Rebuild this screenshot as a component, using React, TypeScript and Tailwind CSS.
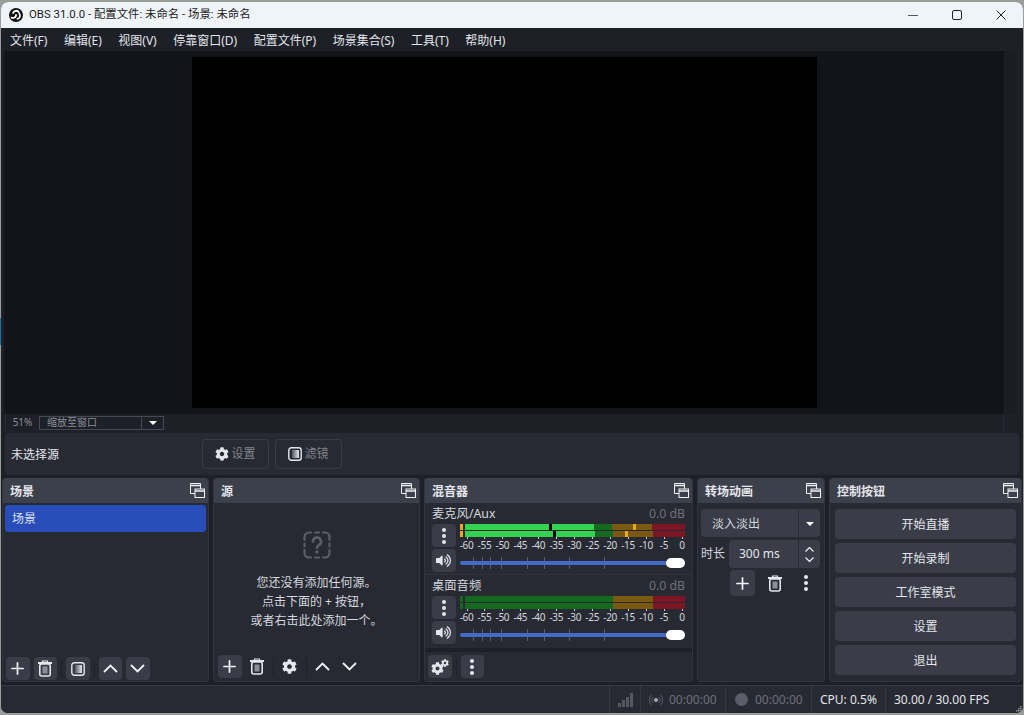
import { Plus } from "lucide-react";
import { FaCog, FaVolumeUp } from "react-icons/fa";

const FONT = "font-['Noto_Sans','Noto_Sans_CJK_SC',sans-serif]";

const MENU = ["文件(F)", "编辑(E)", "视图(V)", "停靠窗口(D)", "配置文件(P)", "场景集合(S)", "工具(T)", "帮助(H)"];
const DB = ["-60", "-55", "-50", "-45", "-40", "-35", "-30", "-25", "-20", "-15", "-10", "-5", "0"];

function ObsLogo() {
  return (
    <svg width="14" height="14" viewBox="0 0 24 24">
      <circle cx="12" cy="12" r="12" fill="#111" />
      <g fill="none" stroke="#fff" strokeWidth="3" strokeLinecap="round">
        <path d="M7 8.500a5.500 5.500 0 0 1 10 -1" />
        <path d="M17.500 9.500a5.500 5.500 0 0 1 -3 9" />
        <path d="M12 13.500a5.500 5.500 0 0 1 -7.500 3" />
      </g>
      <circle cx="12" cy="12" r="1.600" fill="#fff" />
    </svg>
  );
}

function FloatIcon() {
  return (
    <svg width="15" height="15" viewBox="0 0 15 15" fill="none" stroke="#f0f1f4" strokeWidth="1">
      <path d="M5 10.500H.5V.5h10V6" />
      <path d="M.5 2.500h10" strokeWidth="1.600" />
      <rect x="5" y="6" width="9.500" height="8.500" fill="#3c404b" />
      <path d="M5 8h9.500" strokeWidth="1.600" />
    </svg>
  );
}

function TrashIcon() {
  return (
    <svg width="16" height="17" viewBox="0 0 16 17" fill="none" stroke="#e4e6ec" strokeWidth="1.600">
      <path d="M1 3h14" strokeWidth="2" />
      <path d="M5.500 2.500V1h5v1.500" strokeWidth="1.200" />
      <rect x="2.800" y="4" width="10.400" height="12" rx="2" />
      <rect x="5.500" y="6.500" width="5" height="7" fill="#8b8e96" stroke="none" />
    </svg>
  );
}

function FilterIcon({ id }: { id: string }) {
  return (
    <svg width="14" height="14" viewBox="0 0 14 14">
      <defs>
        <linearGradient id={id} x1="0" x2="1" y1="0" y2="0">
          <stop offset="0" stopColor="#555862" />
          <stop offset="1" stopColor="#e4e6ec" />
        </linearGradient>
      </defs>
      <rect x="0.800" y="0.800" width="12.400" height="12.400" rx="2.500" fill="none" stroke="#e4e6ec" strokeWidth="1.400" />
      <rect x="4" y="3" width="7" height="8" fill={`url(#${id})`} />
    </svg>
  );
}

function DotsIcon() {
  return (
    <svg width="6" height="18" viewBox="0 0 6 18" fill="#e4e6ec">
      <circle cx="3" cy="3" r="2" />
      <circle cx="3" cy="9" r="2" />
      <circle cx="3" cy="15" r="2" />
    </svg>
  );
}

function UpIcon() {
  return (
    <svg width="15" height="9" viewBox="0 0 15 9" fill="none" stroke="#f0f1f4" strokeWidth="1.800">
      <path d="M1 8l6.500-6.500L14 8" />
    </svg>
  );
}

function DownIcon() {
  return (
    <svg width="15" height="9" viewBox="0 0 15 9" fill="none" stroke="#f0f1f4" strokeWidth="1.800">
      <path d="M1 1l6.500 6.500L14 1" />
    </svg>
  );
}

function QuestionIcon() {
  return (
    <svg width="28" height="28" viewBox="0 0 28 28" fill="none" stroke="#5b5e68" strokeWidth="2.200" strokeLinecap="round">
      <path d="M1.500 9V6a4.500 4.500 0 0 1 4.500-4.500h2M12 1.500h4M20 1.500h2A4.500 4.500 0 0 1 26.500 6v3M26.500 12.500v3M26.500 19v3a4.500 4.500 0 0 1-4.500 4.500h-2M16 26.500h-4M8 26.500H6A4.500 4.500 0 0 1 1.500 22v-3M1.500 15.500v-3" />
      <path d="M10 10.500a4 4 0 1 1 5.800 3.600c-1.200.6-1.800 1.300-1.800 2.600" strokeWidth="2.600" />
      <circle cx="14" cy="21" r="1" fill="#5b5e68" strokeWidth="1.400" />
    </svg>
  );
}

function ToolBtn({ bg = true, children }: { bg?: boolean; children: React.ReactNode }) {
  return (
    <div className={`flex h-[23px] w-[23.5px] items-center justify-center rounded-[4px] ${bg ? "bg-[#3a3d48]" : ""}`}>
      {children}
    </div>
  );
}

function Sep() {
  return <div className="h-[18px] w-px bg-[#1f2128]" />;
}

function Dock({ title, className, children }: { title: string; className: string; children: React.ReactNode }) {
  return (
    <section className={`flex flex-col overflow-hidden rounded-[4px] border border-t-0 border-[#31343e] bg-[#272a33] ${className}`}>
      <header className="flex h-[25px] shrink-0 items-center justify-between bg-[#3c404b] pl-[7px] pr-[3px]">
        <span className="pt-[2px] text-[12px] font-bold text-[#e4e6ec]">{title}</span>
        <FloatIcon />
      </header>
      {children}
    </section>
  );
}

function DbScale() {
  return (
    <div className="flex justify-between pl-[6px] pr-[2px] text-[10px] leading-[12px] tracking-[-0.3px] text-[#d5d7dd]">
      {DB.map((d) => (
        <span key={d} className="relative flex w-[2px] justify-center whitespace-nowrap">
          <span className="absolute left-[1px] top-[-2px] h-[2px] w-px bg-[#c9cbd2]" />
          {d}
        </span>
      ))}
    </div>
  );
}

function MeterTrack({ segments }: { segments: string[] }) {
  return (
    <div className="flex h-[6px]">
      {segments.map((s, i) => (
        <div key={i} className={s} />
      ))}
    </div>
  );
}

function Slider() {
  return (
    <div className="relative flex h-[14px] flex-1 items-center">
      <svg className="absolute left-0 top-0" width="226" height="14" stroke="#5d6069" strokeWidth="1">
        <path d="M13.500 1v12M22.500 1v12M30.500 1v12M41.500 1v12M67.500 1v12M84.500 1v12M109.500 1v12M144.500 1v12" />
      </svg>
      <div className="relative h-[4px] w-full rounded-full bg-[#4469c9]" />
      <div className="absolute right-0 h-[10px] w-[19px] rounded-[5px] bg-white" />
    </div>
  );
}

function MixerChannel({ name, top, bottom, last }: { name: string; top: string[]; bottom: string[]; last?: boolean }) {
  return (
    <div className={`px-[7px] pt-[3px] ${last ? "" : "border-b border-[#31343e] pb-[2px]"}`}>
      <div className="flex h-[17px] items-center justify-between text-[12.3px]">
        <span className="text-[#d5d7dd]">{name}</span>
        <span className="text-[#6d7079]">0.0 dB</span>
      </div>
      <div className="mt-[1px] flex gap-[4px]">
        <div className="flex shrink-0 flex-col gap-[2px]">
          <ToolBtn>
            <DotsIcon />
          </ToolBtn>
          <ToolBtn>
            <FaVolumeUp size={15} color="#e4e6ec" />
          </ToolBtn>
        </div>
        <div className="flex flex-1 flex-col">
          <div className="flex flex-col gap-[1px]">
            <MeterTrack segments={top} />
            <MeterTrack segments={bottom} />
          </div>
          <div className="mt-[2px]">
            <DbScale />
          </div>
          <div className="mt-[5px]">
            <Slider />
          </div>
        </div>
      </div>
    </div>
  );
}

function ControlBtn({ label }: { label: string }) {
  return (
    <div className="flex h-[30px] items-center justify-center rounded-[4px] bg-[#3a3d48] pt-px text-[12px] text-[#e4e6ec]">
      {label}
    </div>
  );
}

function StatusCell({ className, children }: { className: string; children: React.ReactNode }) {
  return <div className={`flex h-full items-center border-l border-[#363943] ${className}`}>{children}</div>;
}

const green = "bg-[#34d34f]";
const dimGreen = "bg-[#166a20]";
const dimOrange = "bg-[#7a5a10]";
const dimRed = "bg-[#7c1524]";

export default function App() {
  return (
    <div className={`relative h-[715px] w-[1024px] overflow-hidden bg-[#9a9d9c] pb-[2px] pl-px pr-px pt-[2px] ${FONT}`}>
      {/* sliver of the window behind */}
      <div className="absolute left-0 top-[318px] h-[27px] w-px bg-[#1a6f9c]" />
      <div className="flex h-full flex-col overflow-hidden rounded-[7px] bg-[#1d2027]">
        {/* title bar */}
        <div className="flex h-[26px] shrink-0 items-center bg-[#eff4f9] pl-[8px]">
          <ObsLogo />
          <span className="ml-[6px] font-['Roboto','Noto_Sans_CJK_SC',sans-serif] text-[11.4px] text-[#1b1b1b]">
            OBS 31.0.0 - 配置文件: 未命名 - 场景: 未命名
          </span>
          <div className="ml-auto flex items-center gap-[34px] pr-[17px]">
            <div className="h-px w-[10px] bg-[#555]" />
            <div className="h-[10px] w-[10px] rounded-[2px] border border-[#222]" />
            <svg width="10" height="10" viewBox="0 0 10 10" stroke="#222" strokeWidth="1">
              <path d="M.5.5l9 9M9.500.5l-9 9" />
            </svg>
          </div>
        </div>

        {/* menu */}
        <div className="flex h-[23px] shrink-0 items-center gap-[16.5px] bg-[#1d2027] pl-[9px] pt-[2px] text-[12px] text-[#e2e4ea]">
          {MENU.map((m) => (
            <span key={m}>{m}</span>
          ))}
        </div>

        {/* preview */}
        <div className="ml-[3px] mr-[5px] flex h-[363px] shrink-0 bg-[#13141a]">
          <div className="flex flex-1 justify-center pt-[6px]">
            <div className="h-[351px] w-[625px] bg-black" />
          </div>
          <div className="w-[14px] border-l border-r border-[#1f2129] bg-[#1b1d25]" />
        </div>

        {/* zoom bar */}
        <div className="ml-[4px] mr-[5px] flex h-[17px] shrink-0 items-center border-l border-[#2a2d35] text-[10px] text-[#8c8f97]">
          <div className="flex h-full w-[33px] items-center justify-center">51%</div>
          <div className="flex h-[14px] w-[125px] items-center border border-[#464953] pl-[7px]">
            <span className="flex-1">缩放至窗口</span>
            <div className="flex h-full w-[22px] items-center justify-center border-l border-[#464953]">
              <div className="h-0 w-0 border-x-[4px] border-t-[4px] border-x-transparent border-t-white" />
            </div>
          </div>
          <div className="flex-1" />
          <div className="h-full w-[15px] border-l border-[#2a2d35]" />
        </div>

        {/* context bar */}
        <div className="ml-[4px] mr-[4px] mt-[2px] flex h-[42px] shrink-0 items-center rounded-[4px] bg-[#272a33] pl-[6px]">
          <span className="w-[191px] pt-px text-[12px] text-[#e4e6ec]">未选择源</span>
          <div className="flex h-[30px] w-[67px] items-center justify-center gap-[2px] rounded-[4px] border border-[#3a3d47] text-[12px] text-[#80838b]">
            <FaCog size={14} color="#e4e6ec" />
            设置
          </div>
          <div className="ml-[6px] flex h-[30px] w-[67px] items-center justify-center gap-[2px] rounded-[4px] border border-[#3a3d47] text-[12px] text-[#80838b]">
            <FilterIcon id="filter-context" />
            滤镜
          </div>
        </div>

        {/* docks */}
        <div className="mt-[3px] flex h-[204px] shrink-0 gap-[4px] pl-px pr-px">
          <Dock title="场景" className="w-[207px]">
            <div className="flex flex-1 flex-col px-[2px] pt-[2px]">
              <div className="flex h-[27px] items-center rounded-[3px] bg-[#284cb8] pl-[7px] pt-px text-[12px] text-[#dfe3f0]">场景</div>
              <div className="flex-1" />
              <div className="flex items-center gap-[4px] pb-[1px] pl-[1px]">
                <ToolBtn><Plus size={19} color="#f0f1f4" strokeWidth={2.2} /></ToolBtn>
                <ToolBtn><TrashIcon /></ToolBtn>
                <Sep />
                <ToolBtn><FilterIcon id="filter-scene" /></ToolBtn>
                <Sep />
                <ToolBtn><UpIcon /></ToolBtn>
                <ToolBtn><DownIcon /></ToolBtn>
              </div>
            </div>
          </Dock>

          <Dock title="源" className="w-[207px]">
            <div className="flex flex-1 flex-col">
              <div className="flex flex-1 flex-col items-center pt-[28px]">
                <QuestionIcon />
                <div className="mt-[14px] text-center text-[12px] leading-[19px] text-[#d5d7dd]">
                  <div>您还没有添加任何源。</div>
                  <div>点击下面的 + 按钮，</div>
                  <div>或者右击此处添加一个。</div>
                </div>
              </div>
              <div className="flex items-center gap-[4px] pb-[3px] pl-[4px]">
                <ToolBtn><Plus size={19} color="#f0f1f4" strokeWidth={2.2} /></ToolBtn>
                <ToolBtn bg={false}><TrashIcon /></ToolBtn>
                <Sep />
                <ToolBtn bg={false}><FaCog size={15} color="#e4e6ec" /></ToolBtn>
                <Sep />
                <ToolBtn bg={false}><UpIcon /></ToolBtn>
                <ToolBtn bg={false}><DownIcon /></ToolBtn>
              </div>
            </div>
          </Dock>

          <Dock title="混音器" className="w-[269px]">
            <div className="flex flex-1 flex-col">
              <MixerChannel
                name="麦克风/Aux"
                top={[
                  "w-[3px] bg-[#e8a91c]", "w-[2px]",
                  `w-[84px] ${green}`, "w-[3px] bg-black",
                  `w-[42px] ${green}`, `w-[18px] ${dimGreen}`,
                  `w-[21px] ${dimOrange}`, "w-[3px] bg-[#e8a91c]", `w-[16px] ${dimOrange}`,
                  `flex-1 ${dimRed}`,
                ]}
                bottom={[
                  "w-[3px] bg-[#e8a91c]", "w-[2px]",
                  `w-[88px] ${green}`, "w-[3px] bg-black",
                  `w-[39px] ${green}`, `w-[18px] ${dimGreen}`,
                  `w-[12px] ${dimOrange}`, "w-[3px] bg-[#e8a91c]", `w-[25px] ${dimOrange}`,
                  `flex-1 ${dimRed}`,
                ]}
              />
              <MixerChannel
                name="桌面音频"
                last
                top={[
                  `w-[3px] ${dimGreen}`, "w-[2px]",
                  `w-[148px] ${dimGreen}`, `w-[40px] ${dimOrange}`, `flex-1 ${dimRed}`,
                ]}
                bottom={[
                  `w-[3px] ${dimGreen}`, "w-[2px]",
                  `w-[148px] ${dimGreen}`, `w-[40px] ${dimOrange}`, `flex-1 ${dimRed}`,
                ]}
              />
              <div className="mt-[4px] h-[4px] bg-[#1d2027]" />
              <div className="flex flex-1 items-center gap-[4px] pl-[3px]">
                <ToolBtn>
                  <div className="relative h-[16px] w-[18px]">
                    <FaCog size={13} color="#e4e6ec" className="absolute bottom-0 left-0" />
                    <FaCog size={8} color="#e4e6ec" className="absolute right-0 top-0" />
                  </div>
                </ToolBtn>
                <Sep />
                <ToolBtn><DotsIcon /></ToolBtn>
              </div>
            </div>
          </Dock>

          <Dock title="转场动画" className="w-[128px]">
            <div className="flex flex-1 flex-col pl-[3px] pr-[4px] pt-[6px]">
              <div className="flex h-[28px] items-center rounded-[4px] bg-[#3a3d48] pt-px text-[12px] text-[#d5d7dd]">
                <span className="flex-1 pl-[11px]">淡入淡出</span>
                <div className="flex h-full w-[22px] items-center justify-center border-l border-[#272a33]">
                  <div className="h-0 w-0 border-x-[4px] border-t-[4px] border-x-transparent border-t-white" />
                </div>
              </div>
              <div className="mt-[3px] flex items-center">
                <span className="w-[28px] text-[12px] text-[#d5d7dd]">时长</span>
                <div className="flex h-[28px] flex-1 items-center rounded-[4px] bg-[#3a3d48] text-[12px] text-[#e4e6ec]">
                  <span className="flex-1 pl-[10px]">300 ms</span>
                  <div className="flex h-full w-[22px] flex-col items-center justify-center gap-[5px] border-l border-[#272a33]">
                    <svg width="9" height="5" viewBox="0 0 9 5" fill="none" stroke="#f0f1f4" strokeWidth="1.200"><path d="M.5 4.500l4-4 4 4" /></svg>
                    <svg width="9" height="5" viewBox="0 0 9 5" fill="none" stroke="#f0f1f4" strokeWidth="1.200"><path d="M.5.5l4 4 4-4" /></svg>
                  </div>
                </div>
              </div>
              <div className="mt-[2px] flex items-center gap-[8px] pl-[29px]">
                <div className="flex h-[26px] w-[25px] items-center justify-center rounded-[4px] bg-[#3a3d48]">
                  <Plus size={19} color="#f0f1f4" strokeWidth={2.2} />
                </div>
                <ToolBtn bg={false}><TrashIcon /></ToolBtn>
                <ToolBtn bg={false}><DotsIcon /></ToolBtn>
              </div>
            </div>
          </Dock>

          <Dock title="控制按钮" className="flex-1">
            <div className="flex flex-col gap-[4px] px-[5px] pt-[6px]">
              <ControlBtn label="开始直播" />
              <ControlBtn label="开始录制" />
              <ControlBtn label="工作室模式" />
              <ControlBtn label="设置" />
              <ControlBtn label="退出" />
            </div>
          </Dock>
        </div>

        {/* status bar */}
        <div className="relative mt-[3px] flex flex-1 items-center justify-end border-t border-[#363943] bg-[#272a33] text-[12px]">
          <StatusCell className="w-[31px] justify-center">
            <svg width="15" height="14" viewBox="0 0 15 14" fill="#555862">
              <rect x="0" y="10" width="3" height="4" />
              <rect x="4" y="7" width="3" height="7" />
              <rect x="8" y="4" width="3" height="10" />
              <rect x="12" y="0" width="3" height="14" />
            </svg>
          </StatusCell>
          <StatusCell className="w-[85px] gap-[6px] pl-[8px] text-[#6d7079]">
            <svg width="14" height="12" viewBox="0 0 14 12" fill="none" stroke="#5b5e68" strokeWidth="1">
              <circle cx="7" cy="6" r="2" fill="#a5a7ae" stroke="none" />
              <path d="M4.200 2.800a4.500 4.500 0 0 0 0 6.400M9.800 2.800a4.500 4.500 0 0 1 0 6.400M2.300 1a7 7 0 0 0 0 10M11.700 1a7 7 0 0 1 0 10" />
            </svg>
            00:00:00
          </StatusCell>
          <StatusCell className="w-[86px] gap-[7px] pl-[9px] text-[#6d7079]">
            <div className="h-[13px] w-[13px] rounded-full bg-[#5b5e68]" />
            00:00:00
          </StatusCell>
          <StatusCell className="w-[74px] pl-[8px] text-[#e4e6ec]">CPU: 0.5%</StatusCell>
          <StatusCell className="w-[138px] pl-[8px] text-[#e4e6ec]">30.00 / 30.00 FPS</StatusCell>
          <svg className="absolute bottom-[1px] right-[1px]" width="6" height="6" viewBox="0 0 6 6" fill="#8c8f97">
            <rect x="4" y="0" width="1.500" height="1.500" />
            <rect x="2" y="2" width="1.500" height="1.500" />
            <rect x="4" y="2" width="1.500" height="1.500" />
            <rect x="0" y="4" width="1.500" height="1.500" />
            <rect x="2" y="4" width="1.500" height="1.500" />
            <rect x="4" y="4" width="1.500" height="1.500" />
          </svg>
        </div>
      </div>
    </div>
  );
}
